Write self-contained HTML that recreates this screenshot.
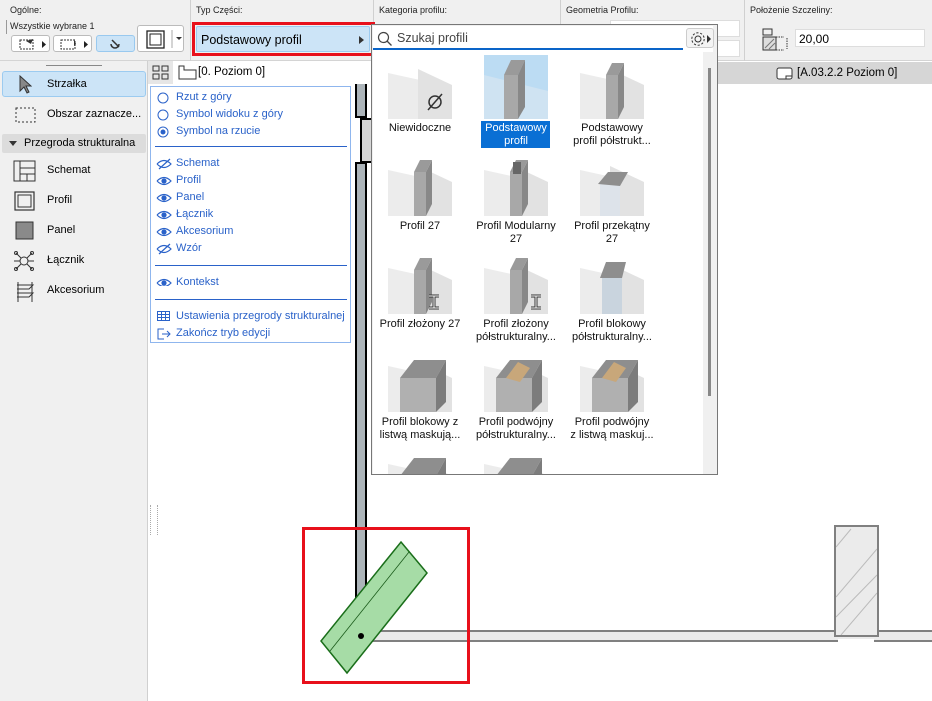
<!DOCTYPE html>
<html><head><meta charset="utf-8"><style>
*{margin:0;padding:0;box-sizing:border-box}
body{width:932px;height:701px;overflow:hidden;background:#fff;font-family:"Liberation Sans",sans-serif;font-size:11px;color:#000;position:relative}
.a{position:absolute}
.lbl{font-size:9px;color:#222}
.btn{position:absolute;background:#fff;border:1px solid #bbb;border-radius:3px}
.li{position:absolute;left:0;width:148px;height:30px;font-size:11px}
.li span{position:absolute;left:47px;top:8px}
.bl{position:absolute;left:176px;color:#2a62c9;font-size:11px}
.it{position:absolute;width:96px;text-align:center;font-size:11px;line-height:12.5px;color:#111}
.th{position:absolute;width:64px;height:64px}
</style></head><body>

<!-- toolbar -->
<div class="a" style="left:0;top:0;width:932px;height:61px;background:#f0f0f0;border-bottom:1px solid #d4d4d4"></div>
<div class="a" style="left:190px;top:0;width:1px;height:61px;background:#d0d0d0"></div>
<div class="a" style="left:373px;top:0;width:1px;height:25px;background:#d0d0d0"></div>
<div class="a" style="left:560px;top:0;width:1px;height:61px;background:#d0d0d0"></div>
<div class="a" style="left:744px;top:0;width:1px;height:61px;background:#d0d0d0"></div>
<div class="a lbl" style="left:10px;top:5px">Ogólne:</div>
<div class="a lbl" style="left:10px;top:21px">Wszystkie wybrane 1</div>
<div class="a" style="left:6px;top:20px;width:1px;height:14px;background:#999"></div>
<div class="btn" style="left:11px;top:35px;width:39px;height:17px"><svg width="39" height="17"><rect x="8" y="4" width="13" height="9" fill="none" stroke="#333" stroke-dasharray="2,1"/><path d="M14 5l7-2-2 5z" fill="#333"/><path d="M30 5l4 3.5-4 3.5z" fill="#222"/></svg></div>
<div class="btn" style="left:53px;top:35px;width:39px;height:17px"><svg width="39" height="17"><rect x="7" y="4" width="14" height="9" fill="none" stroke="#333" stroke-dasharray="2,1"/><path d="M20 3v7l2-2z" fill="#333"/><path d="M30 5l4 3.5-4 3.5z" fill="#222"/></svg></div>
<div class="btn" style="left:96px;top:35px;width:39px;height:17px;background:#cce4f7;border-color:#99c9ef"><svg width="39" height="17"><path d="M15 4l7 7M14 8a4 4 0 1 0 8 0" fill="none" stroke="#333" stroke-width="1.5"/></svg></div>
<div class="btn" style="left:137px;top:25px;width:47px;height:27px"><svg width="47" height="27"><rect x="9" y="5" width="17" height="17" fill="none" stroke="#222" stroke-width="1.3"/><rect x="12" y="8" width="11" height="11" fill="none" stroke="#222"/><line x1="34" y1="4" x2="34" y2="22" stroke="#aaa"/><path d="M38 11h6l-3 3z" fill="#333"/></svg></div>
<div class="a lbl" style="left:196px;top:5px">Typ Części:</div>
<div class="a" style="left:192px;top:22px;width:183px;height:34px;border:3px solid #e8101b"></div>
<div class="a" style="left:196px;top:26px;width:174px;height:26px;background:#cce4f7;border:1px solid #9ccbf0;border-radius:2px;font-size:12.5px;padding:6px 0 0 4px">Podstawowy profil<span class="a" style="right:5px;top:9px;width:0;height:0;border-left:5px solid #333;border-top:4px solid transparent;border-bottom:4px solid transparent"></span></div>
<div class="a lbl" style="left:379px;top:5px">Kategoria profilu:</div>
<div class="a lbl" style="left:566px;top:5px">Geometria Profilu:</div>
<div class="a" style="left:610px;top:20px;width:130px;height:17px;background:#fff;border:1px solid #ddd"></div>
<div class="a" style="left:610px;top:40px;width:130px;height:17px;background:#fff;border:1px solid #ddd"></div>
<div class="a lbl" style="left:750px;top:5px">Położenie Szczeliny:</div>
<svg class="a" style="left:762px;top:28px" width="30" height="25"><rect x="1" y="1" width="9" height="6" fill="none" stroke="#333"/><rect x="1" y="9" width="13" height="13" fill="#ddd" stroke="#333"/><path d="M3 20l9-9M7 21l6-6" stroke="#777"/><path d="M14 9h8M14 22h8M25 10v11" stroke="#333" stroke-dasharray="1.5,1"/></svg>
<div class="a" style="left:795px;top:29px;width:130px;height:18px;background:#fff;border:1px solid #ddd;font-size:12px;padding:2px 0 0 3px">20,00</div>

<!-- left palette -->
<div class="a" style="left:0;top:61px;width:148px;height:640px;background:#f0f0f0;border-right:1px solid #d0d0d0"></div>
<div class="a" style="left:46px;top:65px;width:56px;height:1px;background:#888"></div>
<div class="li" style="top:71px;left:2px;width:144px;height:26px;background:#cce4f7;border:1px solid #9ccbf0;border-radius:3px"><svg class="a" style="left:15px;top:3px" width="14" height="20"><path d="M2 1v15l4-4 3 6 2-1-3-6h5z" fill="#888" stroke="#333"/></svg><span style="left:44px;top:6px">Strzałka</span></div>
<div class="li" style="top:100px"><svg class="a" style="left:15px;top:7px" width="22" height="16"><rect x="1" y="1" width="19" height="14" fill="none" stroke="#333" stroke-dasharray="2,2"/></svg><span>Obszar zaznacze...</span></div>
<div class="a" style="left:2px;top:134px;width:144px;height:19px;background:#dcdcdc;border-radius:2px;font-size:11px;padding:3px 0 0 22px">Przegroda strukturalna<span class="a" style="left:7px;top:7px;border-top:5px solid #333;border-left:4px solid transparent;border-right:4px solid transparent"></span></div>
<div class="li" style="top:156px"><svg class="a" style="left:13px;top:4px" width="24" height="22"><rect x="1" y="1" width="21" height="20" fill="none" stroke="#333"/><path d="M7 1v20M7 8h15M7 14h15M14 14v7" stroke="#333" fill="none"/></svg><span>Schemat</span></div>
<div class="li" style="top:186px"><svg class="a" style="left:13px;top:4px" width="24" height="22"><rect x="2" y="2" width="19" height="18" fill="none" stroke="#333" stroke-width="1.2"/><rect x="5" y="5" width="13" height="12" fill="none" stroke="#333"/></svg><span>Profil</span></div>
<div class="li" style="top:216px"><svg class="a" style="left:13px;top:4px" width="24" height="22"><rect x="3" y="2" width="17" height="17" fill="#8a8a8a" stroke="#333"/></svg><span>Panel</span></div>
<div class="li" style="top:246px"><svg class="a" style="left:13px;top:4px" width="24" height="22"><circle cx="11" cy="11" r="4" fill="none" stroke="#333"/><path d="M3 3l5 5M19 3l-5 5M3 19l5-5M19 19l-5-5M1 11h6M15 11h6" stroke="#333"/><circle cx="3" cy="3" r="1.5" fill="none" stroke="#333"/><circle cx="19" cy="3" r="1.5" fill="none" stroke="#333"/><circle cx="3" cy="19" r="1.5" fill="none" stroke="#333"/><circle cx="19" cy="19" r="1.5" fill="none" stroke="#333"/></svg><span>Łącznik</span></div>
<div class="li" style="top:276px"><svg class="a" style="left:13px;top:4px" width="24" height="22"><path d="M4 5h16l-4 4H4M4 13h16l-4 4H4M5 2v20M19 2v20" fill="none" stroke="#333"/></svg><span>Akcesorium</span></div>
<div class="a" style="left:150px;top:505px;width:8px;height:30px;border-left:1px dotted #aaa;border-right:1px dotted #aaa"></div>

<!-- tab row -->
<div class="a" style="left:148px;top:61px;width:25px;height:23px;background:#e6e6e6"></div>
<svg class="a" style="left:152px;top:65px" width="18" height="16"><rect x="1" y="1" width="6" height="5" fill="none" stroke="#333"/><rect x="10" y="1" width="6" height="5" fill="none" stroke="#333"/><rect x="1" y="9" width="6" height="5" fill="none" stroke="#333"/><rect x="10" y="9" width="6" height="5" fill="none" stroke="#333"/></svg>
<svg class="a" style="left:178px;top:65px" width="20" height="16"><path d="M1 14V1h5v4h12v9z" fill="none" stroke="#333"/></svg>
<div class="a" style="left:198px;top:66px;font-size:11.5px">[0. Poziom 0]</div>
<div class="a" style="left:717px;top:62px;width:215px;height:22px;background:#d6d6d6"></div>
<svg class="a" style="left:776px;top:67px" width="18" height="14"><rect x="1" y="1" width="15" height="11" rx="2" fill="#fff" stroke="#333"/><path d="M10 12V9h6" fill="none" stroke="#333"/></svg>
<div class="a" style="left:797px;top:67px;font-size:11.5px">[A.03.2.2 Poziom 0]</div>

<!-- walls -->
<div class="a" style="left:355px;top:84px;width:12px;height:34px;background:#acb4b9;border-left:2px solid #000;border-right:2px solid #000;border-bottom:2px solid #000"></div>
<div class="a" style="left:360px;top:118px;width:13px;height:45px;background:#d6d6d6;border:2px solid #000"></div>
<div class="a" style="left:355px;top:162px;width:12px;height:450px;background:#acb4b9;border-left:2px solid #000;border-right:2px solid #000;border-top:2px solid #000"></div>
<div class="a" style="left:372px;top:630px;width:560px;height:12px;background:#ebebeb;border-top:2px solid #808080;border-bottom:2px solid #808080"></div>
<div class="a" style="left:834px;top:525px;width:45px;height:112px;background:#ebebeb;border:2px solid #808080"></div>
<div class="a" style="left:838px;top:639px;width:36px;height:3px;background:#fff"></div>
<svg class="a" style="left:836px;top:527px" width="41" height="108"><path d="M0 20L15 2M0 70L41 22M0 90L41 48M5 108L41 66" stroke="#bbb"/></svg>
<div class="a" style="left:302px;top:527px;width:168px;height:157px;border:3px solid #e8101b"></div>
<svg class="a" style="left:300px;top:530px" width="170" height="150"><polygon points="101,13 154,72 47,201" fill="none"/><polygon points="101,12 127,43 47,143 21,111" fill="#a6dca6" stroke="#1a6e1a" stroke-width="1.5"/><line x1="109" y1="22" x2="30" y2="121" stroke="#1a5a1a" stroke-width="0.8"/><circle cx="61" cy="106" r="3" fill="#000"/></svg>

<!-- left view panel -->
<div class="a" style="left:150px;top:86px;width:201px;height:257px;background:#fff;border:1px solid #8fb6ee"></div>
<svg class="a" style="left:156px;top:92px" width="14" height="50"><circle cx="7" cy="6" r="5" fill="none" stroke="#2a62c9"/><circle cx="7" cy="23" r="5" fill="none" stroke="#2a62c9"/><circle cx="7" cy="40" r="5" fill="none" stroke="#2a62c9"/><circle cx="7" cy="40" r="2.5" fill="#2a62c9"/></svg>
<div class="bl" style="top:91px">Rzut z góry</div>
<div class="bl" style="top:108px">Symbol widoku z góry</div>
<div class="bl" style="top:125px">Symbol na rzucie</div>
<div class="a" style="left:155px;top:146px;width:192px;height:1px;background:#2a62c9"></div>
<svg class="a" style="left:156px;top:156px" width="18" height="130"><g fill="none" stroke="#2a62c9" stroke-width="1.2"><path d="M1 8q7-7 14 0q-7 7-14 0M3 13L14 3"/><g transform="translate(0,17)"><path d="M1 8q7-7 14 0q-7 7-14 0"/><circle cx="8" cy="8" r="2" fill="#2a62c9"/></g><g transform="translate(0,34)"><path d="M1 8q7-7 14 0q-7 7-14 0"/><circle cx="8" cy="8" r="2" fill="#2a62c9"/></g><g transform="translate(0,51)"><path d="M1 8q7-7 14 0q-7 7-14 0"/><circle cx="8" cy="8" r="2" fill="#2a62c9"/></g><g transform="translate(0,68)"><path d="M1 8q7-7 14 0q-7 7-14 0"/><circle cx="8" cy="8" r="2" fill="#2a62c9"/></g><g transform="translate(0,85)"><path d="M1 8q7-7 14 0q-7 7-14 0M3 13L14 3"/></g><g transform="translate(0,119)"><path d="M1 8q7-7 14 0q-7 7-14 0"/><circle cx="8" cy="8" r="2" fill="#2a62c9"/></g></g></svg>
<div class="bl" style="top:157px">Schemat</div>
<div class="bl" style="top:174px">Profil</div>
<div class="bl" style="top:191px">Panel</div>
<div class="bl" style="top:208px">Łącznik</div>
<div class="bl" style="top:225px">Akcesorium</div>
<div class="bl" style="top:242px">Wzór</div>
<div class="a" style="left:155px;top:265px;width:192px;height:1px;background:#2a62c9"></div>
<div class="bl" style="top:276px">Kontekst</div>
<div class="a" style="left:155px;top:299px;width:192px;height:1px;background:#2a62c9"></div>
<svg class="a" style="left:156px;top:310px" width="16" height="32"><g fill="none" stroke="#2a62c9"><rect x="1.5" y="1.5" width="12" height="9"/><path d="M1.5 4.5h12M1.5 7.5h12M5.5 1.5v9M9.5 1.5v9"/><path d="M8 19H2v10h6M6 24h8M11 21l3 3-3 3"/></g></svg>
<div class="bl" style="top:310px">Ustawienia przegrody strukturalnej</div>
<div class="bl" style="top:327px">Zakończ tryb edycji</div>

<!-- popup -->
<div class="a" style="left:371px;top:24px;width:347px;height:451px;background:#f0f0f0;border:1px solid #777"></div>
<div class="a" style="left:373px;top:26px;width:340px;height:448px;background:#fff"></div>
<div class="a" style="left:373px;top:26px;width:310px;height:24px;background:#fff;border-bottom:2px solid #0a64c8"></div>
<svg class="a" style="left:377px;top:31px" width="16" height="16"><circle cx="6.5" cy="6.5" r="5" fill="none" stroke="#444" stroke-width="1.2"/><path d="M10 10l4.5 4.5" stroke="#444" stroke-width="1.3"/></svg>
<div class="a" style="left:397px;top:31px;font-size:12.5px;color:#444">Szukaj profili</div>
<div class="a" style="left:686px;top:28px;width:28px;height:20px;background:#f4f4f4;border:1px solid #ccc;border-radius:3px"><svg width="28" height="20"><circle cx="11" cy="10" r="3" fill="none" stroke="#333"/><circle cx="11" cy="10" r="6.2" fill="none" stroke="#333" stroke-dasharray="2.2,1.7"/><path d="M20 6l4 4-4 4z" fill="#333"/></svg></div>
<div class="a" style="left:703px;top:52px;width:14px;height:422px;background:#f0f0f0"></div>
<div class="a" style="left:708px;top:68px;width:3px;height:328px;background:#888"></div>

<!-- thumbnails -->
<svg width="0" height="0" style="position:absolute"><defs>
<g id="glass"><polygon points="0,18 64,32 64,64 0,64" fill="#ececec"/><polygon points="30,14 64,30 64,64 30,64" fill="#e2e2e2"/></g>
<g id="col"><use href="#glass"/><polygon points="26,20 32,8 44,8 38,20" fill="#9a9a9a"/><polygon points="38,20 44,8 44,52 38,64" fill="#888"/><rect x="26" y="20" width="12" height="44" fill="#a8a8a8"/></g>
<g id="blk"><use href="#glass"/><polygon points="12,30 26,12 58,12 48,30" fill="#8e8e8e"/><polygon points="48,30 58,12 58,54 48,64" fill="#7c7c7c"/><rect x="12" y="30" width="36" height="34" fill="#b0b0b0"/></g>
</defs></svg>
<div class="th" style="left:388px;top:55px"><svg width="64" height="64"><use href="#glass"/><circle cx="47" cy="47" r="6" fill="none" stroke="#333" stroke-width="1.5"/><path d="M40 55l14-16" stroke="#333" stroke-width="1.5"/></svg></div>
<div class="th" style="left:484px;top:55px;background:#bcdcf3"><svg width="64" height="64"><polygon points="0,20 64,36 64,64 0,64" fill="#cfe3f2"/><polygon points="20,20 27,5 41,5 34,20" fill="#9a9a9a"/><polygon points="34,20 41,5 41,52 34,64" fill="#888"/><rect x="20" y="20" width="14" height="44" fill="#a8a8a8"/></svg></div>
<div class="th" style="left:580px;top:55px"><svg width="64" height="64"><use href="#col"/></svg></div>
<div class="th" style="left:388px;top:152px"><svg width="64" height="64"><use href="#col"/></svg></div>
<div class="th" style="left:484px;top:152px"><svg width="64" height="64"><use href="#col"/><rect x="29" y="10" width="8" height="12" fill="#666"/></svg></div>
<div class="th" style="left:580px;top:152px"><svg width="64" height="64"><use href="#glass"/><rect x="20" y="30" width="20" height="34" fill="#dde3ea"/><polygon points="18,32 28,20 48,20 40,34" fill="#8e8e8e"/></svg></div>
<div class="th" style="left:388px;top:250px"><svg width="64" height="64"><use href="#col"/><path d="M41 46h10M46 46v12M41 58h10" stroke="#333" stroke-width="3"/><path d="M41 46h10M46 46v12M41 58h10" stroke="#fff" stroke-width="1"/></svg></div>
<div class="th" style="left:484px;top:250px"><svg width="64" height="64"><use href="#col"/><path d="M47 46h10M52 46v12M47 58h10" stroke="#333" stroke-width="3"/><path d="M47 46h10M52 46v12M47 58h10" stroke="#fff" stroke-width="1"/></svg></div>
<div class="th" style="left:580px;top:250px"><svg width="64" height="64"><use href="#glass"/><rect x="22" y="26" width="20" height="38" fill="#c9d4de"/><polygon points="20,28 26,12 46,12 42,28" fill="#8e8e8e"/></svg></div>
<div class="th" style="left:388px;top:348px"><svg width="64" height="64"><use href="#blk"/></svg></div>
<div class="th" style="left:484px;top:348px"><svg width="64" height="64"><use href="#blk"/><polygon points="22,30 34,14 46,20 36,34" fill="#c8a77a"/></svg></div>
<div class="th" style="left:580px;top:348px"><svg width="64" height="64"><use href="#blk"/><polygon points="22,30 34,14 46,20 36,34" fill="#c8a77a"/></svg></div>
<div class="th" style="left:388px;top:446px;height:28px;overflow:hidden"><svg width="64" height="28"><use href="#blk"/></svg></div>
<div class="th" style="left:484px;top:446px;height:28px;overflow:hidden"><svg width="64" height="28"><use href="#blk"/></svg></div>

<div class="it" style="left:372px;top:122px">Niewidoczne</div>
<div class="a" style="left:481px;top:121px;width:69px;height:27px;background:#0a6fd4"></div>
<div class="it" style="left:468px;top:122px;color:#fff">Podstawowy<br>profil</div>
<div class="it" style="left:564px;top:122px">Podstawowy<br>profil półstrukt...</div>
<div class="it" style="left:372px;top:220px">Profil 27</div>
<div class="it" style="left:468px;top:220px">Profil Modularny<br>27</div>
<div class="it" style="left:564px;top:220px">Profil przekątny<br>27</div>
<div class="it" style="left:370px;top:318px;width:100px">Profil złożony 27</div>
<div class="it" style="left:466px;top:318px;width:100px">Profil złożony<br>półstrukturalny...</div>
<div class="it" style="left:562px;top:318px;width:100px">Profil blokowy<br>półstrukturalny...</div>
<div class="it" style="left:370px;top:416px;width:100px">Profil blokowy z<br>listwą maskują...</div>
<div class="it" style="left:466px;top:416px;width:100px">Profil podwójny<br>półstrukturalny...</div>
<div class="it" style="left:562px;top:416px;width:100px">Profil podwójny<br>z listwą maskuj...</div>
</body></html>
